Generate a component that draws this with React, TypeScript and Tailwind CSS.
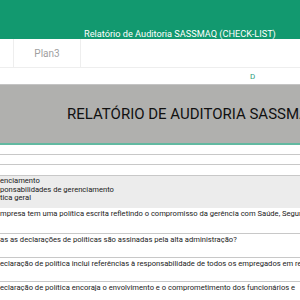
export default function App() {
  const rows = [
    { text: "mpresa tem uma política escrita refletindo o compromisso da gerência com Saúde, Segurança e Meio Ambiente", h: "h-[26px]" },
    { text: "as as declarações de políticas são assinadas pela alta administração?", h: "h-[24px]" },
    { text: "eclaração de política inclui referências à responsabilidade de todos os empregados em relação", h: "h-[24px]" },
    { text: "eclaração  de política  encoraja  o envolvimento  e o comprometimento dos funcionários e", h: "h-[24px]" },
  ];

  return (
    <div className="w-[300px] h-[300px] overflow-hidden bg-white font-['Roboto',sans-serif]">
      {/* Toolbar */}
      <div className="h-[39px] bg-[#12996f] pl-[84px] pt-[28px]">
        <div className="text-[9.2px] leading-[12px] text-white whitespace-nowrap">
          Relatório de Auditoria SASSMAQ (CHECK-LIST)
        </div>
      </div>

      {/* Sheet tabs */}
      <div className="h-[29px] flex border-b border-[#eeeeee]">
        <div className="w-[13px]" />
        <div className="w-[68px] border-l border-r border-[#eeeeee] flex items-center justify-center text-[10px] text-[#a0a0a0]">
          Plan3
        </div>
      </div>

      {/* Column header */}
      <div className="h-[17px] border-b border-[#c4c4c4] pl-[250px] pt-[4px] text-[8px] leading-[9px] text-[#2f9e7c]">
        D
      </div>

      {/* Title banner */}
      <div className="h-[60px] bg-[#b0b0ae] border-b-2 border-[#62b9a1] pl-[67px] pt-[19px] overflow-hidden">
        <div className="text-[15px] leading-[20px] text-[#111] whitespace-nowrap">
          RELATÓRIO DE AUDITORIA SASSMAQ (CHECK-LIST)
        </div>
      </div>

      {/* Empty rows */}
      <div className="h-[10px] border-b border-[#c8c8c8]" />
      <div className="h-[10px] border-b border-[#c8c8c8]" />
      <div className="h-[11px] border-b border-[#c8c8c8]" />

      {/* Section block */}
      <div className="h-[32px] bg-[#ececec] pt-[1px] text-[7.6px] leading-[8.5px] text-[#1a1a1a] whitespace-nowrap overflow-hidden">
        <div>enciamento</div>
        <div>ponsabilidades de gerenciamento</div>
        <div>tica geral</div>
      </div>

      {rows.map((r, i) => (
        <div
          key={i}
          className={`${r.h} border-b border-[#c8c8c8] pt-[1px] text-[7.6px] leading-[9px] text-[#1a1a1a] whitespace-nowrap overflow-hidden`}
        >
          {r.text}
        </div>
      ))}
    </div>
  );
}
